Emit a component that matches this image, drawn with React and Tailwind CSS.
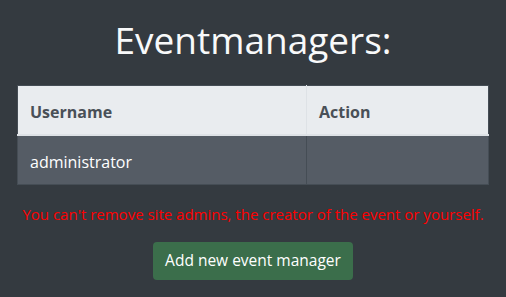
import React from "react";

const managers = [{ username: "administrator" }];

const App = () => {
  return (
    <div
      className="min-h-[297px] bg-[#343a40] px-[17px] pt-[16px] pb-4 text-white"
      style={{ fontFamily: '"Open Sans", "Noto Sans", sans-serif' }}
    >
      <h1 className="mb-[21px] text-center text-[37px] font-normal leading-[48px] text-[#f8f9fa]">
        Eventmanagers:
      </h1>

      <table className="w-full border-collapse border border-[#454d55] text-[16px]">
        <thead>
          <tr className="bg-[#e9ecef] text-[#495057]">
            <th className="w-[289px] border-r border-b-2 border-[#dee2e6] px-3 pt-[14px] pb-[10px] text-left font-bold leading-6">
              Username
            </th>
            <th className="border-b-2 border-[#dee2e6] px-3 pt-[14px] pb-[10px] text-left font-bold leading-6">
              Action
            </th>
          </tr>
        </thead>
        <tbody>
          {managers.map((m) => (
            <tr key={m.username} className="bg-[#555c65] text-white">
              <td className="border-r border-[#454d55] px-3 pt-[14px] pb-[10px] leading-6">
                {m.username}
              </td>
              <td className="px-3 pt-[14px] pb-[10px] leading-6"></td>
            </tr>
          ))}
        </tbody>
      </table>

      <p className="mt-[17px] text-center text-[15px] leading-6 text-[#ff0000]">
        You can't remove site admins, the creator of the event or yourself.
      </p>

      <div className="mt-[16px] flex justify-center">
        <button className="h-[38px] rounded bg-[#3b6e4b] px-3 text-[15.5px] text-white">
          Add new event manager
        </button>
      </div>
    </div>
  );
};

export default App;
